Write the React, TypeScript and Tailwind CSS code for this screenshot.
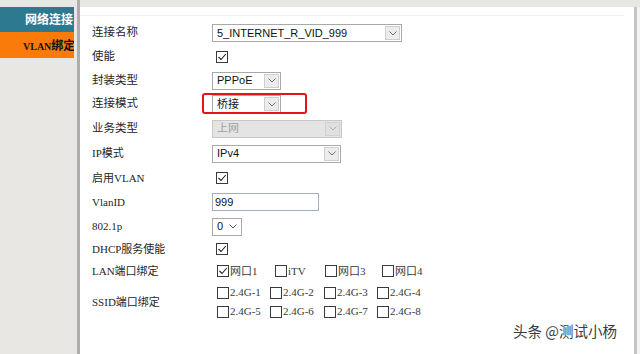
import type { ReactNode } from "react";

const sans = "font-['Liberation_Sans','Noto_Sans_CJK_SC',sans-serif]";
const song = "font-['Liberation_Serif','Noto_Sans_CJK_SC',serif]";

function Chevron({ color = "#6b6b6b" }: { color?: string }) {
  return (
    <svg width="8" height="5" viewBox="0 0 8 5" className="block">
      <path d="M0.5 0.5 L4 4 L7.5 0.5" fill="none" stroke={color} strokeWidth="1" />
    </svg>
  );
}

function Select({
  value,
  width,
  disabled,
  plain,
}: {
  value: string;
  width: string;
  disabled?: boolean;
  plain?: boolean;
}) {
  return (
    <div
      className={`${width} h-[18px] flex items-stretch border ${
        disabled ? "border-[#c8c8c8] bg-[#e4e4e4] text-[#a0a0a0]" : "border-[#a9a9a9] bg-white text-[#111]"
      } ${sans} text-[11px]`}
    >
      <div className="flex-1 flex items-center pl-[4px] leading-none">{value}</div>
      {plain ? (
        <div className="w-[16px] flex items-center justify-center">
          <Chevron color="#555" />
        </div>
      ) : (
        <div
          className={`w-[15px] m-[1px] flex items-center justify-center border ${
            disabled ? "border-[#d2d2d2] bg-[#e0e0e0]" : "border-[#cfcfcf] bg-[#ececec]"
          }`}
        >
          <Chevron color={disabled ? "#b0b0b0" : "#707070"} />
        </div>
      )}
    </div>
  );
}

function Check({ checked }: { checked?: boolean }) {
  return (
    <div className="w-[12px] h-[12px] border border-[#3a3a3a] bg-white shrink-0 flex items-center justify-center">
      {checked && (
        <svg width="10" height="10" viewBox="0 0 10 10" className="block">
          <path d="M1.5 5 L4 7.5 L8.8 2" fill="none" stroke="#222" strokeWidth="1.1" />
        </svg>
      )}
    </div>
  );
}

function Row({
  label,
  h,
  serif,
  children,
}: {
  label: ReactNode;
  h: string;
  serif?: boolean;
  children?: ReactNode;
}) {
  return (
    <div className={`flex items-center ${h}`}>
      <div
        className={`w-[120px] shrink-0 text-[#262626] ${
          serif ? `${song} text-[11px]` : `${sans} text-[11.5px]`
        } leading-none`}
      >
        {label}
      </div>
      <div className="flex items-center">{children}</div>
    </div>
  );
}

function Item({ checked, label, w }: { checked?: boolean; label: string; w: string }) {
  return (
    <div className={`flex items-center ${w}`}>
      <Check checked={checked} />
      <span className={`ml-[1px] ${song} text-[11px] text-[#3a3a3a] leading-none`}>{label}</span>
    </div>
  );
}

export default function App() {
  const ssid = ["2.4G-1", "2.4G-2", "2.4G-3", "2.4G-4", "2.4G-5", "2.4G-6", "2.4G-7", "2.4G-8"];

  return (
    <div className="w-[640px] h-[354px] flex bg-[#e8e7e3] overflow-hidden relative">
      {/* left menu */}
      <div className="w-[80px] shrink-0 pt-[7px] border-r-[3px] border-[#aeaeae]">
        <div className="w-[74px] h-[25px] bg-[#2d7a90] overflow-hidden flex items-center pl-[25px]">
          <span className={`${sans} text-[12px] font-bold text-white whitespace-nowrap leading-none`}>
            网络连接
          </span>
        </div>
        <div className="w-[74px] h-[26px] bg-[#fa7a0a] overflow-hidden flex items-center pl-[23px]">
          <span className="text-[12px] font-bold text-[#111] whitespace-nowrap leading-none">
            <span className="font-['Liberation_Serif',serif] text-[10px]">VLAN</span>
            <span className="font-['Noto_Sans_CJK_SC',sans-serif]">绑定</span>
          </span>
        </div>
      </div>

      {/* content */}
      <div className="flex-1 flex pt-[7px]">
        <div className="w-[554px] bg-white">
          <div className="h-[9px] mr-[10px] border-b border-[#f1f1f1]" />
          <div className="pt-[5px] pl-[12px]">
            <Row label="连接名称" h="h-[24px]">
              <Select value="5_INTERNET_R_VID_999" width="w-[190px]" />
            </Row>
            <Row label="使能" h="h-[24px]">
              <div className="ml-[4px]">
                <Check checked />
              </div>
            </Row>
            <Row label="封装类型" h="h-[23px]">
              <Select value="PPPoE" width="w-[69px]" />
            </Row>
            <Row label="连接模式" h="h-[24px]">
              <div className="relative">
                <Select value="桥接" width="w-[69px]" />
                <div className="absolute left-[-10px] top-[-2px] w-[105px] h-[21px] border-2 border-[#e3141c] rounded-[3px]" />
              </div>
            </Row>
            <Row label="业务类型" h="h-[25px]">
              <Select value="上网" width="w-[130px]" disabled />
            </Row>
            <Row label="IP模式" h="h-[25px]" serif>
              <Select value="IPv4" width="w-[129px]" />
            </Row>
            <Row label="启用VLAN" h="h-[24px]" serif>
              <div className="ml-[4px]">
                <Check checked />
              </div>
            </Row>
            <Row label="VlanID" h="h-[24px]" serif>
              <div className={`w-[107px] h-[18px] border border-[#9fb0c0] flex items-center pl-[2px] ${sans} text-[11px] text-[#111] leading-none`}>
                999
              </div>
            </Row>
            <Row label="802.1p" h="h-[25px]" serif>
              <Select value="0" width="w-[30px]" plain />
            </Row>
            <Row label="DHCP服务使能" h="h-[20px]" serif>
              <div className="ml-[4px]">
                <Check checked />
              </div>
            </Row>
            <Row label="LAN端口绑定" h="h-[24px]" serif>
              <div className="ml-[5px] flex items-center">
                <Item checked label="网口1" w="w-[58px]" />
                <Item label=" iTV" w="w-[50px]" />
                <Item label="网口3" w="w-[57px]" />
                <Item label="网口4" w="w-[50px]" />
              </div>
            </Row>
            <Row label="SSID端口绑定" h="h-[38px]" serif>
              <div className="ml-[5px] grid grid-cols-[53px_54px_53px_54px] grid-rows-[19px_19px] items-center">
                {ssid.map((s) => (
                  <Item key={s} label={s} w="" />
                ))}
              </div>
            </Row>
          </div>
        </div>
        <div className="w-[3px] bg-[#c4c4c4]" />
        <div className="flex-1 bg-[#f3f3f3]" />
      </div>

      {/* watermark */}
      <div className="absolute left-[513px] top-[324px] font-['Noto_Sans_CJK_SC',sans-serif] text-[14.5px] text-[#3c3c3c] leading-none whitespace-nowrap [text-shadow:0_0_2px_#fff]">
        头条 @测试小杨
      </div>
    </div>
  );
}
